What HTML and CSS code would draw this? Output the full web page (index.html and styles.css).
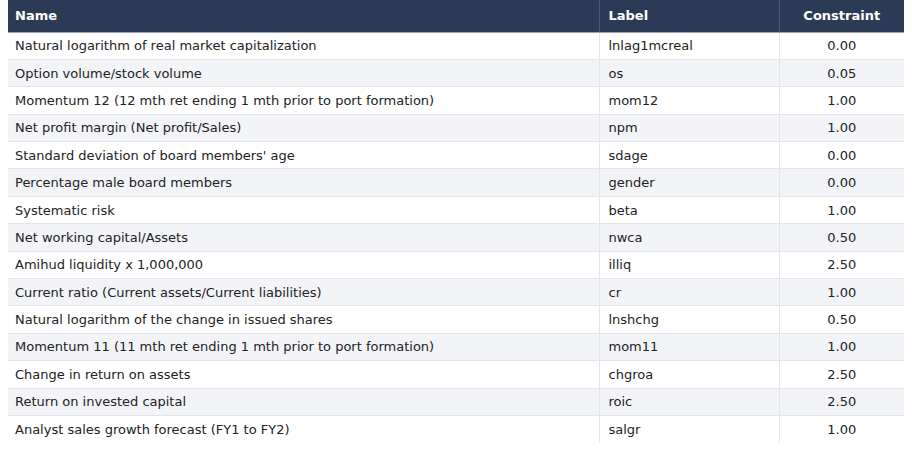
FILE: index.html
```html
<!DOCTYPE html>
<html>
<head>
<meta charset="utf-8">
<link rel="stylesheet" href="styles.css">
</head>
<body>
<table class="grid">
  <thead>
    <tr><th class="c-name">Name</th><th class="c-label">Label</th><th class="c-val">Constraint</th></tr>
  </thead>
  <tbody>
    <tr><td>Natural logarithm of real market capitalization</td><td>lnlag1mcreal</td><td class="num">0.00</td></tr>
    <tr><td>Option volume/stock volume</td><td>os</td><td class="num">0.05</td></tr>
    <tr><td>Momentum 12 (12 mth ret ending 1 mth prior to port formation)</td><td>mom12</td><td class="num">1.00</td></tr>
    <tr><td>Net profit margin (Net profit/Sales)</td><td>npm</td><td class="num">1.00</td></tr>
    <tr><td>Standard deviation of board members' age</td><td>sdage</td><td class="num">0.00</td></tr>
    <tr><td>Percentage male board members</td><td>gender</td><td class="num">0.00</td></tr>
    <tr><td>Systematic risk</td><td>beta</td><td class="num">1.00</td></tr>
    <tr><td>Net working capital/Assets</td><td>nwca</td><td class="num">0.50</td></tr>
    <tr><td>Amihud liquidity x 1,000,000</td><td>illiq</td><td class="num">2.50</td></tr>
    <tr><td>Current ratio (Current assets/Current liabilities)</td><td>cr</td><td class="num">1.00</td></tr>
    <tr><td>Natural logarithm of the change in issued shares</td><td>lnshchg</td><td class="num">0.50</td></tr>
    <tr><td>Momentum 11 (11 mth ret ending 1 mth prior to port formation)</td><td>mom11</td><td class="num">1.00</td></tr>
    <tr><td>Change in return on assets</td><td>chgroa</td><td class="num">2.50</td></tr>
    <tr><td>Return on invested capital</td><td>roic</td><td class="num">2.50</td></tr>
    <tr><td>Analyst sales growth forecast (FY1 to FY2)</td><td>salgr</td><td class="num">1.00</td></tr>
  </tbody>
</table>
</body>
</html>
```

FILE: styles.css
```css
html, body {
  margin: 0;
  padding: 0;
  background: #ffffff;
}
body {
  padding: 0 8px;
  font-family: "DejaVu Sans", "Liberation Sans", sans-serif;
  font-size: 13px;
  color: #222222;
}
.grid {
  width: 100%;
  border-collapse: collapse;
  table-layout: fixed;
}
.grid th {
  background: #2b3a55;
  color: #ffffff;
  font-weight: bold;
  text-align: left;
  height: 32px;
  padding: 0 7px;
  box-sizing: border-box;
  border-left: 1px solid #4a5875;
  border-bottom: 1px solid #9aa3b3;
}
.grid th:first-child { border-left: none; }
.grid .c-name { width: 591px; }
.grid .c-label { width: 180px; padding-left: 9px; }
.grid .c-val { text-align: center; }
.grid td {
  height: 27.4px;
  padding: 0 7px;
  box-sizing: border-box;
  border-bottom: 1px solid #e3e5ea;
  border-left: 1px solid #e3e5ea;
  white-space: nowrap;
}
.grid td:first-child { border-left: none; }
.grid td:nth-child(2) { padding-left: 9px; }
.grid tbody tr:nth-child(even) td { background: #f3f4f7; }
.grid tbody tr:last-child td { border-bottom: none; }
.grid td.num { text-align: center; }
```
